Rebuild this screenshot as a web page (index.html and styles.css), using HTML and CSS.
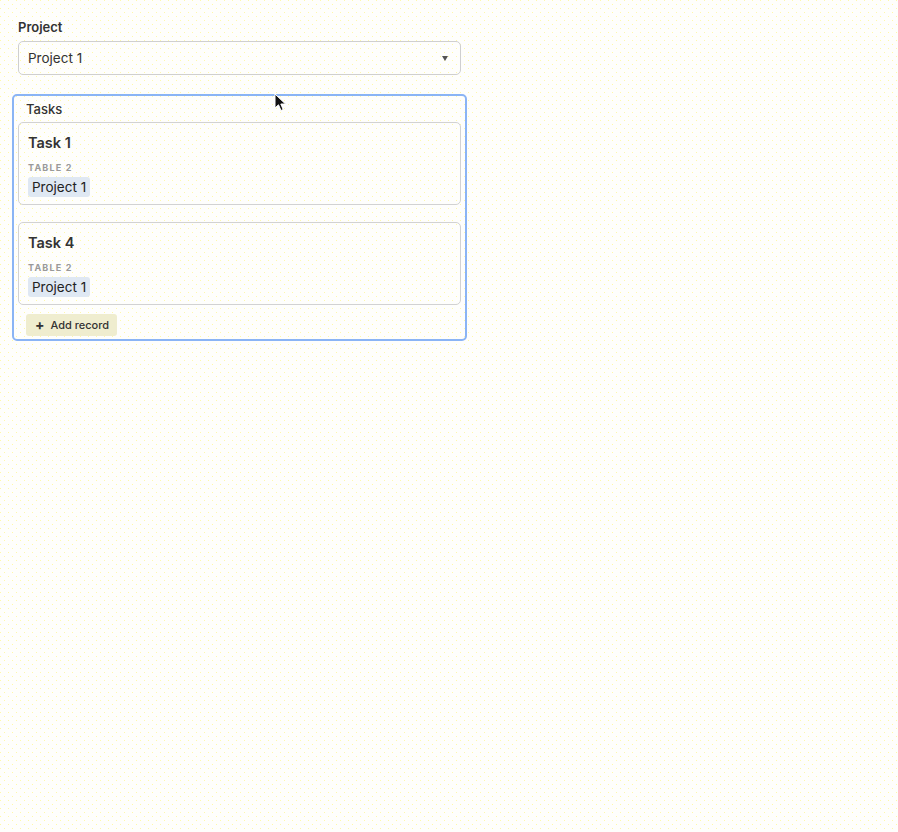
FILE: index.html
```html
<!DOCTYPE html>
<html>
<head>
<meta charset="utf-8">
<link rel="stylesheet" href="styles.css">
</head>
<body>
<div class="page">
  <div class="field">
    <div class="field-label">Project</div>
    <div class="select">
      <span class="select-value">Project 1</span>
      <span class="caret"></span>
    </div>
  </div>
  <div class="tasks">
    <div class="tasks-label">Tasks</div>
    <div class="card">
      <div class="card-title">Task 1</div>
      <div class="card-field">TABLE 2</div>
      <span class="pill">Project 1</span>
    </div>
    <div class="card">
      <div class="card-title">Task 4</div>
      <div class="card-field">TABLE 2</div>
      <span class="pill">Project 1</span>
    </div>
    <button class="add-btn"><span class="plus">+</span>Add record</button>
  </div>
  <svg class="cursor" width="14" height="20" viewBox="0 0 14 20">
    <path d="M1 1 L1 15 L4.5 11.8 L7 17.5 L9.2 16.5 L6.8 11 L11.5 11 Z" fill="#111" stroke="#fff" stroke-width="1"/>
  </svg>
</div>
</body>
</html>
```
FILE: styles.css
```css
html, body {
  margin: 0;
  padding: 0;
}
body {
  width: 898px;
  height: 832px;
  background-color: #fefefc;
  font-family: Inter, "Noto Sans", sans-serif;
  color: #333;
  overflow: hidden;
}
.page {
  position: relative;
  height: 832px;
  padding: 19px 0 0 12px;
  box-sizing: border-box;
  background-image:
    radial-gradient(circle at 0.5px 0.5px, #fff8a8 0.5px, transparent 0.6px),
    radial-gradient(circle at 4.5px 4.5px, #fff8a8 0.5px, transparent 0.6px);
  background-size: 8px 8px;
}
.field {
  margin-left: 6px;
  width: 443px;
}
.field-label {
  font-size: 13px;
  line-height: 16px;
  font-weight: 600;
  color: #333;
}
.select {
  margin-top: 6px;
  height: 34px;
  box-sizing: border-box;
  border: 1px solid #cfcfcf;
  border-radius: 5px;
  display: flex;
  align-items: center;
  justify-content: space-between;
  padding: 0 12px 0 9px;
}
.select-value {
  font-size: 13.5px;
  color: #333;
}
.caret {
  width: 0;
  height: 0;
  border-left: 3.5px solid transparent;
  border-right: 3.5px solid transparent;
  border-top: 5px solid #555;
}
.tasks {
  margin-top: 19px;
  width: 455px;
  box-sizing: border-box;
  border: 2px solid #8ab4f5;
  border-radius: 5px;
  padding: 5px 4px 3px 4px;
  display: flex;
  flex-direction: column;
  align-items: flex-start;
}
.tasks-label {
  font-size: 13px;
  line-height: 16px;
  font-weight: 500;
  margin-left: 8px;
  color: #333;
}
.card {
  margin-top: 5px;
  width: 443px;
  height: 83px;
  box-sizing: border-box;
  border: 1px solid #d2d2d2;
  border-radius: 5px;
  padding: 10px 9px 7px 9px;
  display: flex;
  flex-direction: column;
  align-items: flex-start;
}
.card + .card {
  margin-top: 17px;
}
.card-title {
  font-size: 14.5px;
  line-height: 20px;
  font-weight: 600;
  color: #333;
}
.card-field {
  margin-top: 9px;
  font-size: 9px;
  line-height: 12px;
  font-weight: 700;
  letter-spacing: 1.2px;
  color: #999;
}
.pill {
  margin-top: 3px;
  height: 20px;
  line-height: 20px;
  padding: 0 4px;
  border-radius: 3px;
  background: #dfe8f3;
  font-size: 13.5px;
  color: #222;
}
.add-btn {
  margin-top: 9px;
  margin-left: 8px;
  height: 22px;
  border: none;
  border-radius: 3px;
  background: #efedcf;
  font-family: Inter, "Noto Sans", sans-serif;
  font-size: 11px;
  font-weight: 500;
  color: #333;
  padding: 0 8px 0 9px;
  display: flex;
  align-items: center;
  gap: 6px;
}
.plus {
  font-size: 14px;
  font-weight: 700;
  line-height: 1;
}
.cursor {
  position: absolute;
  left: 274px;
  top: 93px;
}
```
